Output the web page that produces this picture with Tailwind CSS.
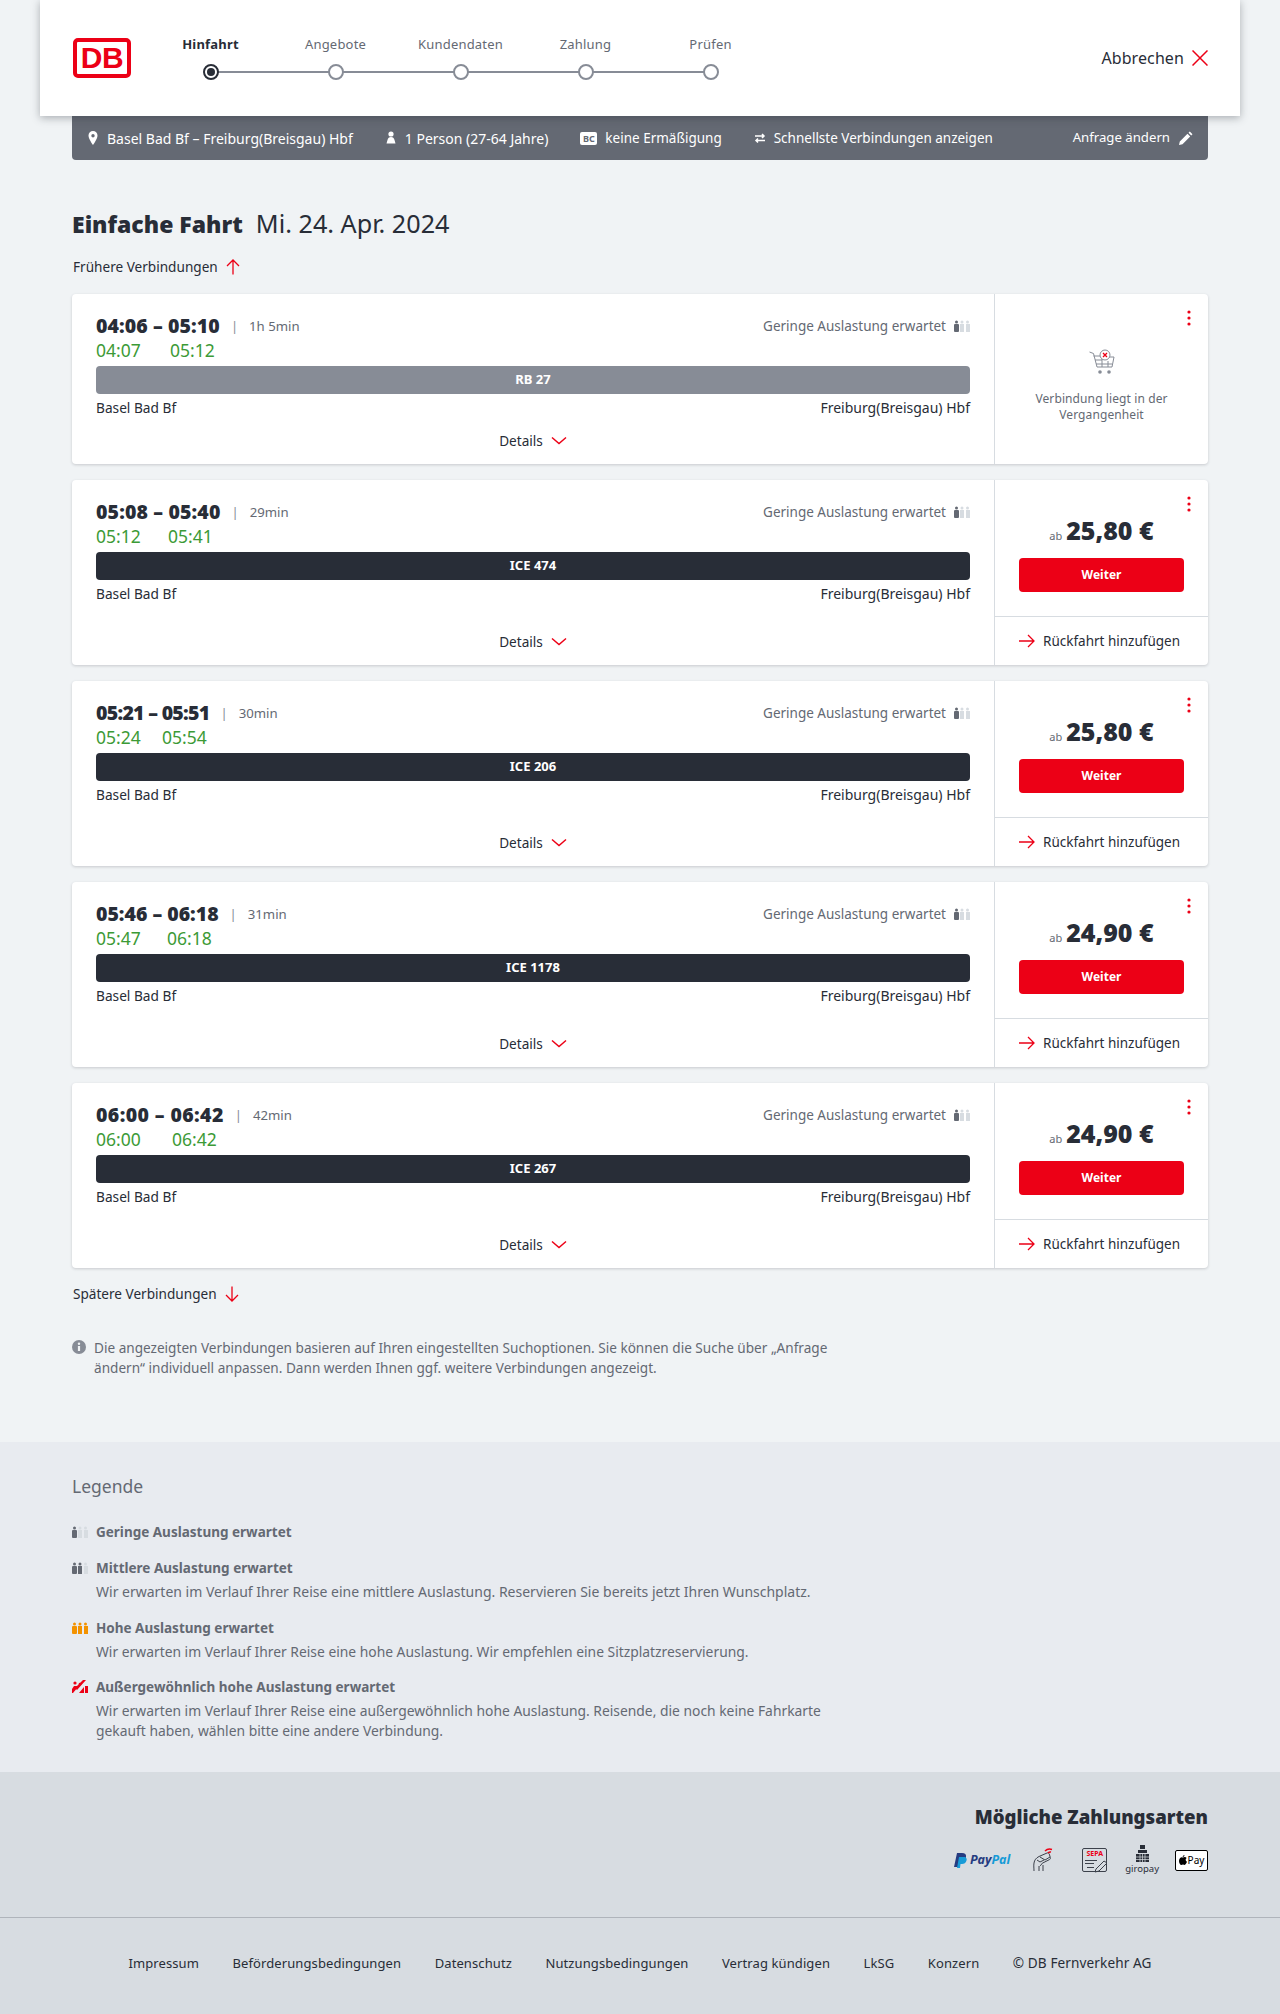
<!DOCTYPE html>
<html lang="de">
  <head>
    <meta charset="UTF-8" />
    <title>Einfache Fahrt</title>
    <script src="https://cdn.jsdelivr.net/npm/@tailwindcss/browser@4"></script>
  </head>
  <body class="bg-[#f0f3f5] font-['Noto_Sans',sans-serif] text-[#282d37] w-[1280px]">
    <!-- Kopf -->
    <header class="relative z-10 mx-10 h-[116px] bg-white shadow-[0_2px_8px_rgba(40,45,55,0.35)] flex items-center pl-[33px] pr-8">
      <div class="w-[58px] h-[40px] shrink-0 border-[4px] border-[#ec0016] rounded-[5px] flex items-center justify-center font-['Liberation_Sans',sans-serif] font-bold text-[30px] leading-none tracking-[-0.5px] text-[#ec0016]">DB</div>
      <ol class="ml-[17px] -mt-[2px] flex w-[625px] text-[13px] text-[#646973] tracking-[0.2px]">
        <li class="relative w-[125px] text-center">
          <p class="font-bold text-[#282d37] mb-[11px] leading-[18px]">Hinfahrt</p>
          <span class="relative z-10 block mx-auto w-4 h-4 rounded-full border-2 border-[#282d37] bg-white p-[2px]"><span class="block w-2 h-2 rounded-full bg-[#282d37]"></span></span>
          <span class="absolute left-[62px] top-[36px] w-[125px] h-[2px] bg-[#878c96]"></span>
        </li>
        <li class="relative w-[125px] text-center">
          <p class="mb-[11px] leading-[18px]">Angebote</p>
          <span class="relative z-10 block mx-auto w-4 h-4 rounded-full border-2 border-[#878c96] bg-white"></span>
          <span class="absolute left-[62px] top-[36px] w-[125px] h-[2px] bg-[#878c96]"></span>
        </li>
        <li class="relative w-[125px] text-center">
          <p class="mb-[11px] leading-[18px]">Kundendaten</p>
          <span class="relative z-10 block mx-auto w-4 h-4 rounded-full border-2 border-[#878c96] bg-white"></span>
          <span class="absolute left-[62px] top-[36px] w-[125px] h-[2px] bg-[#878c96]"></span>
        </li>
        <li class="relative w-[125px] text-center">
          <p class="mb-[11px] leading-[18px]">Zahlung</p>
          <span class="relative z-10 block mx-auto w-4 h-4 rounded-full border-2 border-[#878c96] bg-white"></span>
          <span class="absolute left-[62px] top-[36px] w-[125px] h-[2px] bg-[#878c96]"></span>
        </li>
        <li class="relative w-[125px] text-center">
          <p class="mb-[11px] leading-[18px]">Prüfen</p>
          <span class="relative z-10 block mx-auto w-4 h-4 rounded-full border-2 border-[#878c96] bg-white"></span>
        </li>
      </ol>
      <div class="ml-auto flex items-center gap-2 text-base tracking-[0.1px]">
        Abbrechen
        <svg class="w-4 h-4" viewBox="0 0 16 16" fill="none" stroke="#ec0016" stroke-width="1.500"><path d="M0.500 0.500l15 15M15.500 0.500l-15 15" /></svg>
      </div>
    </header>

    <main class="mx-[72px]">
      <!-- Suchanfrage -->
      <div class="h-[44px] bg-[#646973] rounded-b flex items-center pl-[15px] pr-[15px] text-[13.500px] text-white">
        <svg class="w-3 h-4 mr-2" viewBox="0 0 12 16" fill="#fff"><path fill-rule="evenodd" d="M6 1a4.500 4.500 0 0 0-4.500 4.500C1.500 9 6 15 6 15s4.500-6 4.500-9.500A4.500 4.500 0 0 0 6 1zm0 3a1.700 1.700 0 1 1 0 3.400A1.700 1.700 0 0 1 6 4z" /></svg>
        <span class="text-[14px]">Basel Bad Bf – Freiburg(Breisgau) Hbf</span>
        <svg class="w-3 h-4 ml-8 mr-2" viewBox="0 0 12 16" fill="#fff"><circle cx="6" cy="4" r="2.600" /><path d="M6 7c-2 0-3 1-3.500 3L1.500 13.500h9L9.500 10C9 8 8 7 6 7z" /></svg>
        <span class="text-[14px]">1 Person (27-64 Jahre)</span>
        <span class="ml-8 mr-2 w-[17px] h-[13px] bg-white rounded-[2px] text-[#646973] text-[9px] font-bold leading-[13px] text-center">BC</span>
        <span>keine Ermäßigung</span>
        <svg class="w-3 h-3 ml-8 mr-2" viewBox="0 0 12 12" fill="none" stroke="#fff" stroke-width="1.500"><path d="M1 4h9M8 2l2 2-2 2M11 8.500H2M4 6.500l-2 2 2 2" /></svg>
        <span>Schnellste Verbindungen anzeigen</span>
        <span class="ml-auto text-[13.200px]">Anfrage ändern</span>
        <svg class="w-[15px] h-[15px] ml-2" viewBox="0 0 15 15" fill="#fff"><path d="M1 14l.8-3.500L9.500 2.800l2.700 2.700-7.700 7.700zM10.500 1.800l1.300-1.300 2.700 2.700-1.300 1.300z" /></svg>
      </div>

      <h1 class="mt-[47px] h-[32px] leading-[32px] flex items-baseline"><b class="font-black text-[23px]">Einfache Fahrt</b><span class="ml-[13px] text-[25.200px]">Mi. 24. Apr. 2024</span></h1>

      <a class="mt-[18px] ml-[1px] flex items-center gap-2 text-[13.600px] h-[20px]">
        Frühere Verbindungen
        <svg class="w-[14px] h-[16px]" viewBox="0 0 14 16" fill="none" stroke="#ec0016" stroke-width="1.300"><path d="M7 15.500V1M1 7l6-6 6 6" /></svg>
      </a>

      <!-- Verbindungen -->
      <section id="liste" class="mt-[17px] flex flex-col gap-4">
        <!-- vergangene Verbindung -->
        <article class="flex h-[170px] bg-white rounded shadow-[0_1px_3px_rgba(40,45,55,0.2)]">
          <div class="w-[923px] border-r border-[#d7dce1] px-6 pt-[20px] flex flex-col">
            <div class="flex items-center h-[24px] leading-[24px]">
              <b class="text-[19.500px] font-black tracking-[0.1px]">04:06 – 05:10</b>
              <span class="ml-[11px] text-[#878c96] text-[13px]">|</span>
              <span class="ml-[11px] text-[13.200px] text-[#646973]">1h 5min</span>
              <span class="ml-auto text-[13.500px] text-[#646973]">Geringe Auslastung erwartet</span>
              <svg class="ml-2 w-4 h-3" viewBox="0 0 16 12"><circle cx="2.500" cy="2" r="1.500" fill="#646973" /><rect x="0" y="4" width="5" height="8" rx="1" fill="#646973" /><circle cx="8" cy="2" r="1.500" fill="#d7dce1" /><rect x="6" y="4" width="4" height="8" fill="#d7dce1" /><circle cx="13.500" cy="2" r="1.500" fill="#d7dce1" /><rect x="12" y="4" width="4" height="8" fill="#d7dce1" /></svg>
            </div>
            <div class="flex text-[#3c9a36] text-[17.500px] leading-[24px]"><span class="w-[74px]">04:07</span><span>05:12</span></div>
            <div class="mt-[4px] h-[28px] rounded bg-[#878c96] text-white text-[13px] font-bold leading-[26px] text-center">RB 27</div>
            <div class="mt-[4px] flex justify-between text-[13.700px] leading-[20px]"><span>Basel Bad Bf</span><span class="text-[14px]">Freiburg(Breisgau) Hbf</span></div>
            <div class="mt-[13px] flex items-center justify-center gap-2 text-[13.600px] leading-[20px]">Details
              <svg class="w-[16px] h-[10px]" viewBox="0 0 16 10" fill="none" stroke="#ec0016" stroke-width="1.500"><path d="M1 1.500l7 6 7-6" /></svg>
            </div>
          </div>
          <div class="relative flex-1 flex flex-col items-center pt-[55px] text-[#646973]">
            <svg class="absolute top-[16px] right-[17px] w-1 h-4" viewBox="0 0 4 16" fill="#ec0016"><circle cx="2" cy="2" r="1.600" /><circle cx="2" cy="8" r="1.600" /><circle cx="2" cy="14" r="1.600" /></svg>
            <svg class="w-[26px] h-[26px]" viewBox="0 0 26 26" fill="none" stroke="#878c96" stroke-width="1"><path d="M0.500 3l4 1.500L8 18h15l2-10h-7M4.500 7H12M6 11h7M7 15h16M13 4v14M19 12v6" /><circle cx="16" cy="6" r="5" fill="#fff" /><path d="M14 4l4 4M18 4l-4 4" stroke="#ec0016" stroke-width="1.300" /><circle cx="11" cy="23" r="1.800" fill="#878c96" stroke="none" /><circle cx="20" cy="23" r="1.800" fill="#878c96" stroke="none" /></svg>
            <p class="mt-[16px] w-[150px] text-center text-[12px] leading-[16px] tracking-[0.1px]">Verbindung liegt in der Vergangenheit</p>
          </div>
        </article>
      </section>

      <a class="mt-[16px] ml-[1px] flex items-center gap-2 text-[13.600px] h-[20px]">
        Spätere Verbindungen
        <svg class="w-[14px] h-[16px]" viewBox="0 0 14 16" fill="none" stroke="#ec0016" stroke-width="1.300"><path d="M7 0.500V15M1 9l6 6 6-6" /></svg>
      </a>

      <div class="mt-[34px] flex w-[780px] text-[13.600px] leading-[20px] text-[#646973] pb-[64px]">
        <svg class="w-[14px] h-[14px] mt-[2px] mr-2 shrink-0" viewBox="0 0 14 14"><circle cx="7" cy="7" r="7" fill="#878c96" /><circle cx="7" cy="3.800" r="1.200" fill="#f0f3f5" /><rect x="5.900" y="6" width="2.200" height="5" fill="#f0f3f5" /></svg>
        <p>Die angezeigten Verbindungen basieren auf Ihren eingestellten Suchoptionen. Sie können die Suche über „Anfrage ändern“ individuell anpassen. Dann werden Ihnen ggf. weitere Verbindungen angezeigt.</p>
      </div>
    </main>

    <!-- Legende -->
    <section class="bg-[#e8ebf0] h-[330px] px-[72px] pt-[32px] text-[14px] text-[#646973]">
      <h2 class="text-[17.500px] leading-[24px]">Legende</h2>
      <div class="mt-[24px] w-[800px] flex flex-col">
        <div class="flex h-[36px]">
          <svg class="w-4 h-3 mt-[4px] mr-2 shrink-0" viewBox="0 0 16 12"><circle cx="2.500" cy="2" r="1.500" fill="#646973" /><rect x="0" y="4" width="5" height="8" rx="1" fill="#646973" /><circle cx="8" cy="2" r="1.500" fill="#d7dce1" /><rect x="6" y="4" width="4" height="8" fill="#d7dce1" /><circle cx="13.500" cy="2" r="1.500" fill="#d7dce1" /><rect x="12" y="4" width="4" height="8" fill="#d7dce1" /></svg>
          <b class="leading-[20px] font-bold text-[13.500px]">Geringe Auslastung erwartet</b>
        </div>
        <div class="flex h-[60px]">
          <svg class="w-4 h-3 mt-[4px] mr-2 shrink-0" viewBox="0 0 16 12"><circle cx="2.500" cy="2" r="1.500" fill="#646973" /><rect x="0" y="4" width="5" height="8" rx="1" fill="#646973" /><circle cx="8" cy="2" r="1.500" fill="#646973" /><rect x="6" y="4" width="4" height="8" fill="#646973" /><circle cx="13.500" cy="2" r="1.500" fill="#d7dce1" /><rect x="12" y="4" width="4" height="8" fill="#d7dce1" /></svg>
          <div class="leading-[20px]"><b class="font-bold text-[13.500px]">Mittlere Auslastung erwartet</b><p class="mt-1">Wir erwarten im Verlauf Ihrer Reise eine mittlere Auslastung. Reservieren Sie bereits jetzt Ihren Wunschplatz.</p></div>
        </div>
        <div class="flex h-[59px]">
          <svg class="w-4 h-3 mt-[4px] mr-2 shrink-0" viewBox="0 0 16 12" fill="#f39200"><circle cx="2.500" cy="2" r="1.500" /><rect x="0" y="4" width="5" height="8" rx="1" /><circle cx="8" cy="2" r="1.500" /><rect x="6" y="4" width="4" height="8" /><circle cx="13.500" cy="2" r="1.500" /><rect x="12" y="4" width="4" height="8" /></svg>
          <div class="leading-[20px]"><b class="font-bold text-[13.500px]">Hohe Auslastung erwartet</b><p class="mt-1 text-[13.850px]">Wir erwarten im Verlauf Ihrer Reise eine hohe Auslastung. Wir empfehlen eine Sitzplatzreservierung.</p></div>
        </div>
        <div class="flex">
          <svg class="w-4 h-[13px] mt-[3px] mr-2 shrink-0" viewBox="0 0 16 13" fill="#ec0016"><circle cx="3" cy="3" r="1.600" /><path d="M0 9l2-3h3l1 1-5 6H0zM7 13l5-6v6zM13 6h3v7h-3zM3 8l8-8h3L5 10z" /><circle cx="8" cy="4" r="1.300" /></svg>
          <div class="leading-[20px]"><b class="font-bold text-[13.500px]">Außergewöhnlich hohe Auslastung erwartet</b><p class="mt-1 w-[745px] text-[13.850px]">Wir erwarten im Verlauf Ihrer Reise eine außergewöhnlich hohe Auslastung. Reisende, die noch keine Fahrkarte gekauft haben, wählen bitte eine andere Verbindung.</p></div>
        </div>
      </div>
    </section>

    <!-- Zahlungsarten -->
    <section class="bg-[#d7dce1] h-[145px] px-[72px] pt-[31px] flex flex-col items-end">
      <h2 class="text-[18.600px] leading-[28px] font-black">Mögliche Zahlungsarten</h2>
      <div class="mt-[13px] flex items-center h-[32px]">
        <span class="flex items-center gap-[3px]">
          <svg class="w-[13px] h-[15px]" viewBox="0 0 13 15"><path fill="#253b80" d="M3 0h5c3 0 4.500 1.500 4 4-.5 3-2.500 4.500-5 4.500H5L4 14H0z" /><path fill="#179bd7" d="M5 4h6c1.500 1 2 2 1.500 3.500C12 10 10 11 8 11H6.500L6 15H3z" /></svg>
          <span class="text-[12.500px] font-bold italic leading-none text-[#253b80]">Pay<span class="text-[#179bd7]">Pal</span></span>
        </span>
        <svg class="ml-[23px] w-[21px] h-[24px]" viewBox="0 0 21 24" fill="none" stroke="#3c414b" stroke-width="1"><path d="M1 23c0-3-.5-5 0-8s2-5 5-6.500l8-3.500c1-.4 2 .1 2.300 1.100l1 3.400c.3 1-.1 1.800-1 2.200l-7 3.500-1.500 2-1 1M6 23v-5M10 23v-6M4 12l3 2 4-2M7 9l5 3 5-3" /><path d="M12 3c2-2 4-2.500 7-1.500M15 5c1-1 2-1.200 3-1" stroke="#ec0016" stroke-width="1.500" /></svg>
        <span class="ml-[28px] relative w-[25px] h-[24px] border-[1.500px] border-[#3c414b] rounded-[2px] text-[7px] font-bold text-center text-[#ec0016] leading-[10px]">SEPA
          <svg class="absolute left-[2px] top-[10px] w-[24px] h-[14px]" viewBox="0 0 24 14" fill="none" stroke="#3c414b" stroke-width="1"><path d="M0 1.500h12M0 4.500h9M2 8.500h7M11 10l8-8 3 2-8 8-4 1z" /></svg>
        </span>
        <span class="ml-[18px] flex flex-col items-center">
          <svg class="w-[15px] h-[17px]" viewBox="0 0 15 17" fill="#282d37"><path d="M5 0h5v4h-5zM3 5h9v3h-9zM1 9h13v8H1z" /><path stroke="#d7dce1" stroke-width=".7" d="M5 9v8M7.500 9v8M10 9v8M1 12h13M1 14.500h13" /></svg>
          <span class="text-[9.500px] leading-[13px]">giropay</span>
        </span>
        <span class="ml-[16px] w-[33px] h-[21px] bg-white border border-black rounded-[2px] flex items-center justify-center gap-[1px] text-[10px] leading-none text-black">
          <svg class="w-[8px] h-[10px]" viewBox="0 0 8 10" fill="#000"><path d="M5.500 0c.1 1-.8 2-1.800 2C3.600 1 4.500 0 5.500 0zM4 2.500c.5 0 1-.4 1.800-.4.700 0 1.400.4 1.800 1-1.500 1-1.200 3 .4 3.700C7.500 8 6.600 10 5.600 10c-.6 0-.9-.4-1.600-.4S3 10 2.400 10C1.200 10 0 8 0 6c0-2.500 1.500-3.800 2.800-3.800.5 0 .9.300 1.200.3z" /></svg>Pay
        </span>
      </div>
    </section>

    <footer class="bg-[#d7dce1] h-[97px] pb-[5px] border-t border-[#afb4bb] flex items-center justify-center gap-[33.500px] text-[13px] tracking-[0.1px]">
      <a>Impressum</a>
      <a>Beförderungsbedingungen</a>
      <a>Datenschutz</a>
      <a>Nutzungsbedingungen</a>
      <a>Vertrag kündigen</a>
      <a>LkSG</a>
      <a>Konzern</a>
      <a class="text-[13.600px]">© DB Fernverkehr AG</a>
    </footer>

    <script>
      // Verbindungen mit Preis
      const verbindungen = [
        { zeit: "05:08 – 05:40", breite: "tracking-[0.15px]", dauer: "29min", ist: ["05:12", "05:41"], spalte: "w-[72px]", zug: "ICE 474", preis: "25,80 €" },
        { zeit: "05:21 – 05:51", breite: "tracking-[-0.7px]", dauer: "30min", ist: ["05:24", "05:54"], spalte: "w-[66px]", zug: "ICE 206", preis: "25,80 €" },
        { zeit: "05:46 – 06:18", breite: "tracking-[0px]", dauer: "31min", ist: ["05:47", "06:18"], spalte: "w-[71px]", zug: "ICE 1178", preis: "24,90 €" },
        { zeit: "06:00 – 06:42", breite: "tracking-[0.4px]", dauer: "42min", ist: ["06:00", "06:42"], spalte: "w-[76px]", zug: "ICE 267", preis: "24,90 €" },
      ];

      const liste = document.getElementById("liste");
      verbindungen.forEach((v) => {
        const karte = document.createElement("article");
        karte.className = "flex h-[185px] bg-white rounded shadow-[0_1px_3px_rgba(40,45,55,0.2)]";
        karte.innerHTML = `
          <div class="w-[923px] border-r border-[#d7dce1] px-6 pt-[20px] flex flex-col">
            <div class="flex items-center h-[24px] leading-[24px]">
              <b class="text-[19.500px] font-black ${v.breite}">${v.zeit}</b>
              <span class="ml-[11px] text-[#878c96] text-[13px]">|</span>
              <span class="ml-[11px] text-[13.200px] text-[#646973]">${v.dauer}</span>
              <span class="ml-auto text-[13.500px] text-[#646973]">Geringe Auslastung erwartet</span>
              <svg class="ml-2 w-4 h-3" viewBox="0 0 16 12"><circle cx="2.500" cy="2" r="1.500" fill="#646973" /><rect x="0" y="4" width="5" height="8" rx="1" fill="#646973" /><circle cx="8" cy="2" r="1.500" fill="#d7dce1" /><rect x="6" y="4" width="4" height="8" fill="#d7dce1" /><circle cx="13.500" cy="2" r="1.500" fill="#d7dce1" /><rect x="12" y="4" width="4" height="8" fill="#d7dce1" /></svg>
            </div>
            <div class="flex text-[#3c9a36] text-[17.500px] leading-[24px]"><span class="${v.spalte}">${v.ist[0]}</span><span>${v.ist[1]}</span></div>
            <div class="mt-[4px] h-[28px] rounded bg-[#282d37] text-white text-[13px] font-bold leading-[26px] text-center">${v.zug}</div>
            <div class="mt-[4px] flex justify-between text-[13.700px] leading-[20px]"><span>Basel Bad Bf</span><span class="text-[14px]">Freiburg(Breisgau) Hbf</span></div>
            <div class="mt-[28px] flex items-center justify-center gap-2 text-[13.600px] leading-[20px]">Details
              <svg class="w-[16px] h-[10px]" viewBox="0 0 16 10" fill="none" stroke="#ec0016" stroke-width="1.500"><path d="M1 1.500l7 6 7-6" /></svg>
            </div>
          </div>
          <div class="relative flex-1 flex flex-col">
            <svg class="absolute top-[16px] right-[17px] w-1 h-4" viewBox="0 0 4 16" fill="#ec0016"><circle cx="2" cy="2" r="1.600" /><circle cx="2" cy="8" r="1.600" /><circle cx="2" cy="14" r="1.600" /></svg>
            <div class="h-[137px] border-b border-[#d7dce1] px-6 pt-[34px] flex flex-col items-center">
              <p class="h-[32px] leading-[32px] text-[#646973] text-[11px]">ab <b class="text-[25px] font-black text-[#282d37] ml-[1px]">${v.preis}</b></p>
              <button class="mt-[12px] w-[165px] h-[34px] rounded bg-[#ec0016] text-white text-[12px] font-bold">Weiter</button>
            </div>
            <div class="flex-1 flex items-center pl-6 gap-[8px] text-[13.500px]">
              <svg class="w-[16px] h-[14px] shrink-0" viewBox="0 0 16 14" fill="none" stroke="#ec0016" stroke-width="1.300"><path d="M0 7h15M9 1l6 6-6 6" /></svg>
              Rückfahrt hinzufügen
            </div>
          </div>`;
        liste.appendChild(karte);
      });
    </script>
  </body>
</html>
